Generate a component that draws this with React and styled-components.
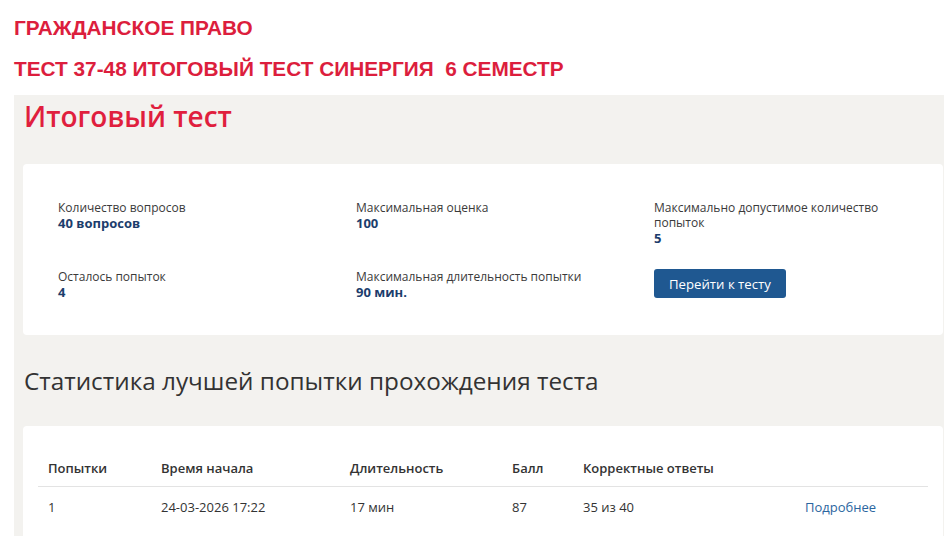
import React from "react";
import styled, { createGlobalStyle } from "styled-components";

const Global = createGlobalStyle`
  html, body { margin: 0; padding: 0; background: #ffffff; }
  body { font-family: "Open Sans", "Noto Sans", sans-serif; color: #333; }
`;

const Page = styled.div`
  width: 946px;
  height: 536px;
  overflow: hidden;
  display: flex;
  flex-direction: column;
`;

const Banner = styled.div`
  padding: 16px 0 0 14px;
  display: flex;
  flex-direction: column;
  gap: 17px;
  height: 79px;
  box-sizing: border-box;
`;

const BannerLine = styled.div`
  font-family: "Liberation Sans", Arial, sans-serif;
  font-weight: 700;
  font-size: 20.8px;
  line-height: 24px;
  color: #dc1e3d;
  white-space: pre;
`;

const Panel = styled.div`
  margin: 16px 2px 0 14px;
  background: #f3f2ef;
  padding: 4px 1px 0 9px;
  flex: 1;
`;

const Title = styled.h1`
  margin: 0 0 31px 1px;
  font-size: 28px;
  line-height: 34px;
  font-weight: 600;
  color: #e01f3e;
`;

const Card = styled.div`
  background: #ffffff;
  border-radius: 4px;
  padding: ${(p) => p.$pad};
`;

const InfoGrid = styled.div`
  display: grid;
  grid-template-columns: 298px 298px 1fr;
  row-gap: 23px;
`;

const Field = styled.div`
  display: flex;
  flex-direction: column;
  align-items: flex-start;
`;

const Label = styled.div`
  font-size: 12px;
  line-height: 15px;
  color: #3a3a3a;
`;

const Value = styled.div`
  font-size: 13px;
  line-height: 16px;
  font-weight: 700;
  color: #1c3d6c;
`;

const Button = styled.button`
  height: 29px;
  padding: 0 15px;
  border: none;
  border-radius: 3px;
  background: #1f5891;
  color: #ffffff;
  font-family: "Open Sans", sans-serif;
  font-size: 13.2px;
  cursor: pointer;
`;

const SubTitle = styled.h2`
  margin: 30px 0 29px 1px;
  font-size: 24.3px;
  line-height: 32px;
  font-weight: 400;
  color: #333;
`;

const Table = styled.table`
  width: 100%;
  table-layout: fixed;
  border-collapse: collapse;
  font-size: 13px;
  color: #333;
`;

const Th = styled.th`
  box-sizing: border-box;
  text-align: left;
  font-weight: 600;
  padding: 11px 10px 9px;
  line-height: 18px;
  border-bottom: 1px solid #e3e3e3;
  width: ${(p) => p.$w || "auto"};
`;

const Td = styled.td`
  padding: 11px 10px 30px;
  line-height: 18px;
`;

const Link = styled.a`
  color: #2b66a0;
  text-decoration: none;
`;

const info = [
  { label: "Количество вопросов", value: "40 вопросов" },
  { label: "Максимальная оценка", value: "100" },
  { label: "Максимально допустимое количество попыток", value: "5" },
  { label: "Осталось попыток", value: "4" },
  { label: "Максимальная длительность попытки", value: "90 мин." },
];

export default function App() {
  return (
    <Page>
      <Global />
      <Banner>
        <BannerLine>ГРАЖДАНСКОЕ ПРАВО</BannerLine>
        <BannerLine>ТЕСТ 37-48 ИТОГОВЫЙ ТЕСТ СИНЕРГИЯ  6 СЕМЕСТР</BannerLine>
      </Banner>
      <Panel>
        <Title>Итоговый тест</Title>
        <Card $pad="36px 35px 35px 35px">
          <InfoGrid>
            {info.map((f) => (
              <Field key={f.label}>
                <Label>{f.label}</Label>
                <Value>{f.value}</Value>
              </Field>
            ))}
            <Field>
              <Button>Перейти к тесту</Button>
            </Field>
          </InfoGrid>
        </Card>
        <SubTitle>Статистика лучшей попытки прохождения теста</SubTitle>
        <Card $pad="22px 15px 0 15px">
          <Table>
            <thead>
              <tr>
                <Th $w="113px">Попытки</Th>
                <Th $w="189px">Время начала</Th>
                <Th $w="162px">Длительность</Th>
                <Th $w="71px">Балл</Th>
                <Th $w="222px">Корректные ответы</Th>
                <Th />
              </tr>
            </thead>
            <tbody>
              <tr>
                <Td>1</Td>
                <Td>24-03-2026 17:22</Td>
                <Td>17 мин</Td>
                <Td>87</Td>
                <Td>35 из 40</Td>
                <Td>
                  <Link href="#">Подробнее</Link>
                </Td>
              </tr>
            </tbody>
          </Table>
        </Card>
      </Panel>
    </Page>
  );
}
